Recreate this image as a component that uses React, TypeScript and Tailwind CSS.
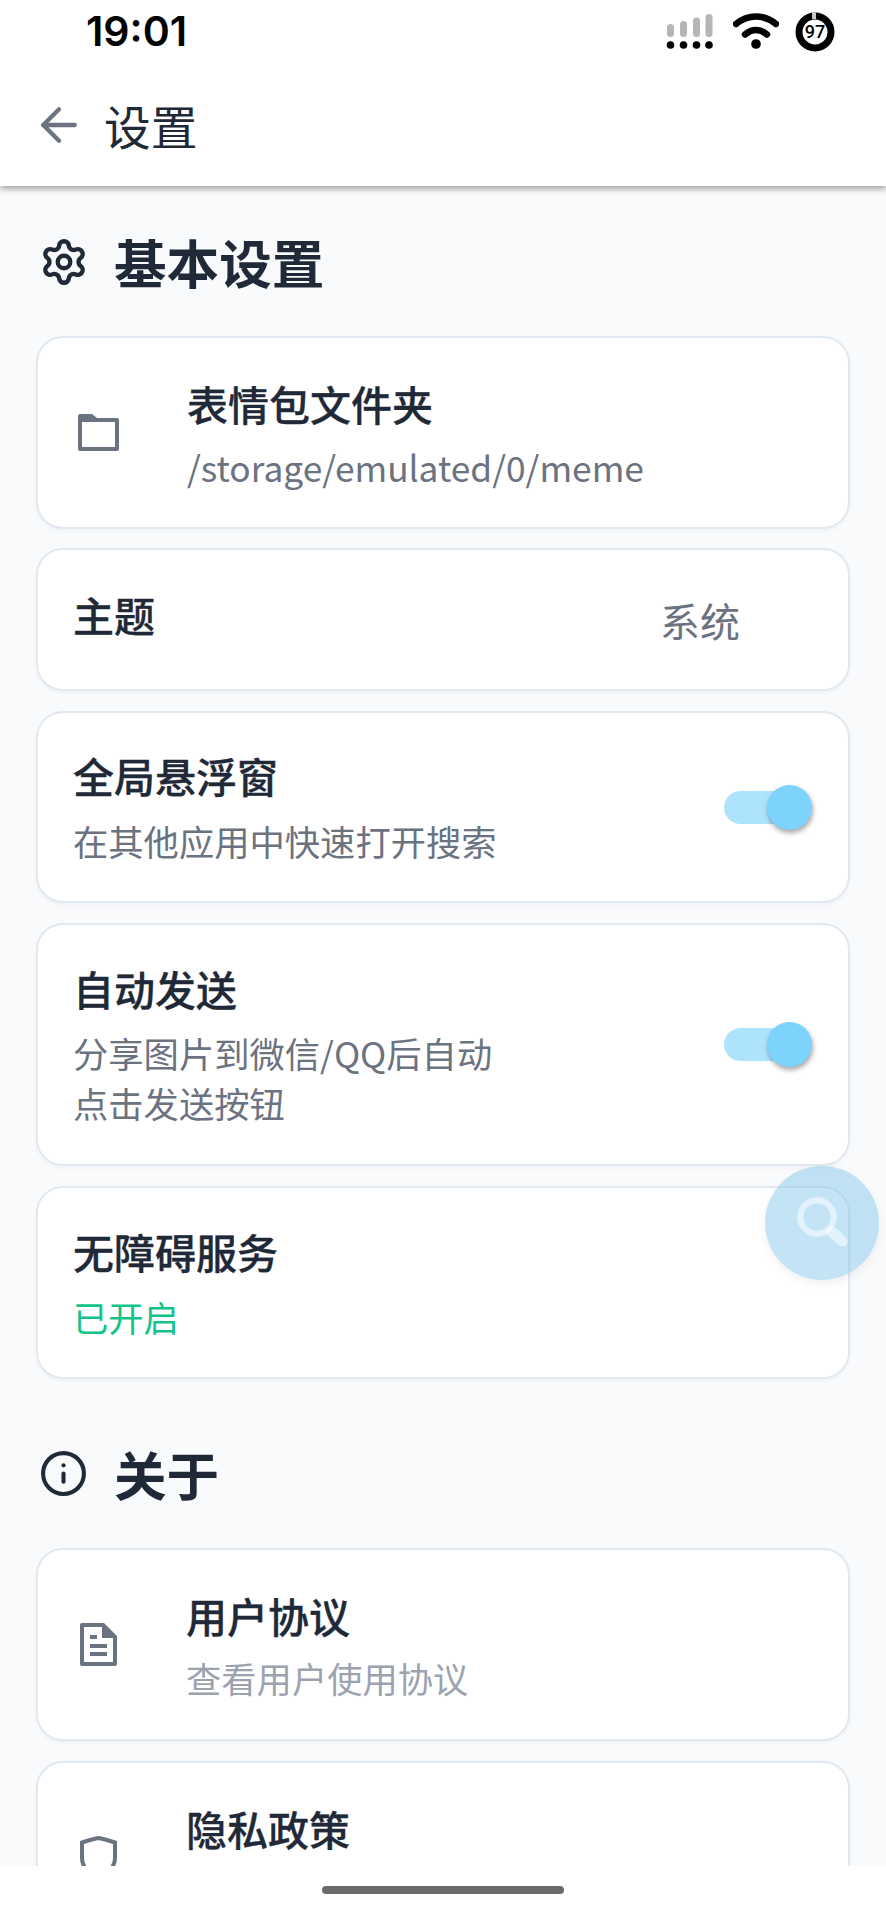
import React from "react";
import { ArrowLeft, Settings, Info } from "lucide-react";

const font = { fontFamily: '"Noto Sans CJK SC", sans-serif' };

function Toggle() {
  return (
    <div className="relative h-[45px] w-[88px] shrink-0">
      <div className="absolute left-0 top-[6px] h-[33px] w-[80px] rounded-full bg-[#aee3fe]" />
      <div className="absolute right-0 top-0 h-[45px] w-[45px] rounded-full bg-[#7dd3fc] shadow-[1px_3px_5px_rgba(0,0,0,0.35)]" />
    </div>
  );
}

function FolderIcon() {
  return (
    <svg width="41" height="37" viewBox="0 0 41 37" className="shrink-0">
      <path
        fillRule="evenodd"
        fill="#6b7280"
        d="M2 0h12l5 4h20a2 2 0 0 1 2 2v29a2 2 0 0 1-2 2H2a2 2 0 0 1-2-2V2a2 2 0 0 1 2-2zM4 8v25h33V8z"
      />
    </svg>
  );
}

function DocIcon() {
  return (
    <svg width="37" height="43" viewBox="0 0 37 43" className="shrink-0">
      <path
        fillRule="evenodd"
        fill="#6b7280"
        d="M2 0h22l13 13v28a2 2 0 0 1-2 2H2a2 2 0 0 1-2-2V2a2 2 0 0 1 2-2zM4 4v35h29V15H22V4z"
      />
      <rect x="10" y="12" width="7" height="4" fill="#6b7280" />
      <rect x="10" y="21" width="17" height="4" fill="#6b7280" />
      <rect x="10" y="29" width="17" height="4" fill="#6b7280" />
    </svg>
  );
}

function ShieldIcon() {
  return (
    <svg width="37" height="43" viewBox="0 0 37 43" className="shrink-0">
      <path
        fill="none"
        stroke="#6b7280"
        strokeWidth="4"
        d="M2 6.500C8 4.500 13 3 18.500 2C24 3 29 4.500 35 6.500V22C35 31 29 37 18.500 41C8 37 2 31 2 22Z"
      />
    </svg>
  );
}

function StatusIcons() {
  return (
    <div className="flex items-center">
      <svg width="48" height="38" viewBox="0 0 48 38" className="mt-[3px] shrink-0">
        <rect x="1" y="10" width="7" height="13" rx="3.500" fill="#b5b5b5" />
        <rect x="14" y="7" width="7" height="16" rx="3.500" fill="#b5b5b5" />
        <rect x="27" y="3.500" width="7" height="19.500" rx="3.500" fill="#b5b5b5" />
        <rect x="39.500" y="0" width="7" height="23" rx="3.500" fill="#b5b5b5" />
        <circle cx="4.500" cy="31" r="3.800" fill="#000" />
        <circle cx="17.500" cy="31" r="3.800" fill="#000" />
        <circle cx="30.500" cy="31" r="3.800" fill="#000" />
        <circle cx="43" cy="31" r="3.800" fill="#000" />
      </svg>
      <svg width="46" height="38" viewBox="0 0 46 38" className="ml-[19px] shrink-0">
        <path d="M3 11C15 1 31 1 43 11" fill="none" stroke="#000" strokeWidth="6.500" strokeLinecap="round" />
        <path d="M12 21.500C19 15.500 27 15.500 34 21.500" fill="none" stroke="#000" strokeWidth="6.500" strokeLinecap="round" />
        <circle cx="23" cy="31" r="4.800" fill="#000" />
      </svg>
      <svg width="40" height="40" viewBox="0 0 40 40" className="ml-[16px] shrink-0">
        <circle cx="20" cy="20" r="16" fill="none" stroke="#000" strokeWidth="7" />
        <path d="M18 0.500V7M20 0.500V7" stroke="#c9c9c9" strokeWidth="2" />
        <text
          x="20"
          y="26"
          textAnchor="middle"
          fontSize="18"
          fontWeight="500"
          fill="#000"
          fontFamily="Roboto, sans-serif"
        >
          97
        </text>
      </svg>
    </div>
  );
}

function SectionHeader({ icon, title }: { icon: React.ReactNode; title: string }) {
  return (
    <div className="flex h-[75px] items-center">
      <div className="flex w-[78px] shrink-0 items-center">{icon}</div>
      <span className="text-[52.6px] font-bold leading-[75px] text-[#1f2937]">{title}</span>
    </div>
  );
}

function Card({ className, children }: { className: string; children: React.ReactNode }) {
  return (
    <div
      className={`flex items-center rounded-[27px] border-2 border-[#e2e8f0] bg-white shadow-[0_2px_4px_rgba(15,23,42,0.04)] ${className}`}
    >
      {children}
    </div>
  );
}

const title = "text-[41px] font-medium leading-[58px] text-[#1f2937] [-webkit-text-stroke:0.3px_#1f2937]";
const sub = "text-[35.3px] leading-[51px]";

export default function App() {
  return (
    <div className="relative flex h-[1920px] w-[886px] flex-col overflow-hidden bg-[#f8fafc]" style={font}>
      <header className="relative z-10 h-[186px] shrink-0 bg-white shadow-[0_3px_6px_rgba(0,0,0,0.35)]">
        <div className="flex h-[63px] items-center justify-between pl-[86px] pr-[51px]">
          <span
            className="text-[41px] font-semibold leading-none text-black"
            style={{ fontFamily: "Inter, sans-serif" }}
          >
            19:01
          </span>
          <StatusIcons />
        </div>
        <div className="flex h-[123px] items-center pl-[32px]">
          <ArrowLeft size={54} strokeWidth={1.9} color="#6b7280" className="shrink-0" />
          <span className="ml-[18px] text-[46.75px] leading-[65px] text-[#1f2937]">设置</span>
        </div>
      </header>

      <main className="flex-1 overflow-hidden px-[36px] pt-[38px]">
        <SectionHeader icon={<Settings size={50} strokeWidth={2.1} color="#1f2937" className="ml-[3px]" />} title="基本设置" />

        <div className="mt-[37px] flex flex-col gap-[20px]">
          <Card className="mb-[-1px] h-[193px] pl-[40px]">
            <FolderIcon />
            <div className="ml-[68px]">
              <div className={title}>表情包文件夹</div>
              <div className={`mt-[9px] ${sub} text-[#6b7280]`}>/storage/emulated/0/meme</div>
            </div>
          </Card>

          <Card className="h-[143px] justify-between pl-[35px] pr-[108px]">
            <span className={`mb-[12px] ${title}`}>主题</span>
            <span className="text-[40px] leading-[58px] text-[#6b7280]">系统</span>
          </Card>

          <Card className="h-[192px] justify-between pl-[35px] pr-[36px]">
            <div className="mb-[2px]">
              <div className={title}>全局悬浮窗</div>
              <div className={`mt-[11px] ${sub} text-[#6b7280]`}>在其他应用中快速打开搜索</div>
            </div>
            <Toggle />
          </Card>

          <Card className="h-[243px] justify-between pl-[35px] pr-[36px]">
            <div className="mb-[3px]">
              <div className={title}>自动发送</div>
              <div className="mt-[11px] text-[35.3px] leading-[50px] text-[#6b7280]">
                分享图片到微信/QQ后自动
                <br />
                点击发送按钮
              </div>
            </div>
            <Toggle />
          </Card>

          <Card className="h-[193px] pl-[35px]">
            <div className="mb-[2px]">
              <div className={title}>无障碍服务</div>
              <div className={`mt-[11px] ${sub} text-[#10c48a]`}>已开启</div>
            </div>
          </Card>
        </div>

        <div className="mt-[57px]">
          <SectionHeader icon={<Info size={49} strokeWidth={2} color="#1f2937" className="ml-[3px]" />} title="关于" />
        </div>

        <div className="mt-[37px] flex flex-col gap-[20px]">
          <Card className="h-[193px] pl-[42px]">
            <DocIcon />
            <div className="ml-[69px]">
              <div className={title}>用户协议</div>
              <div className={`mt-[8px] ${sub} text-[#9ca3af]`}>查看用户使用协议</div>
            </div>
          </Card>
          <Card className="h-[193px] pl-[42px]">
            <ShieldIcon />
            <div className="ml-[69px]">
              <div className={title}>隐私政策</div>
              <div className="mt-[8px] h-[51px]" />
            </div>
          </Card>
        </div>
      </main>

      <div className="relative z-10 flex h-[54px] shrink-0 items-center justify-center bg-white">
        <div className="mt-[-6px] h-[8px] w-[242px] rounded-full bg-[#6b6b6b]" />
      </div>

      <div className="absolute left-[765px] top-[1166px] z-20 flex h-[114px] w-[114px] items-center justify-center rounded-full bg-[rgba(125,195,235,0.45)] shadow-[0_4px_10px_rgba(0,0,0,0.06)]">
        <svg width="54" height="54" viewBox="0 0 54 54" className="ml-[4px] mt-[2px]">
          <circle cx="20" cy="20" r="16.700" fill="none" stroke="rgba(255,255,255,0.55)" strokeWidth="6" />
          <path d="M35 35L45 44" fill="none" stroke="rgba(255,255,255,0.55)" strokeWidth="11" strokeLinecap="round" />
        </svg>
      </div>
    </div>
  );
}
